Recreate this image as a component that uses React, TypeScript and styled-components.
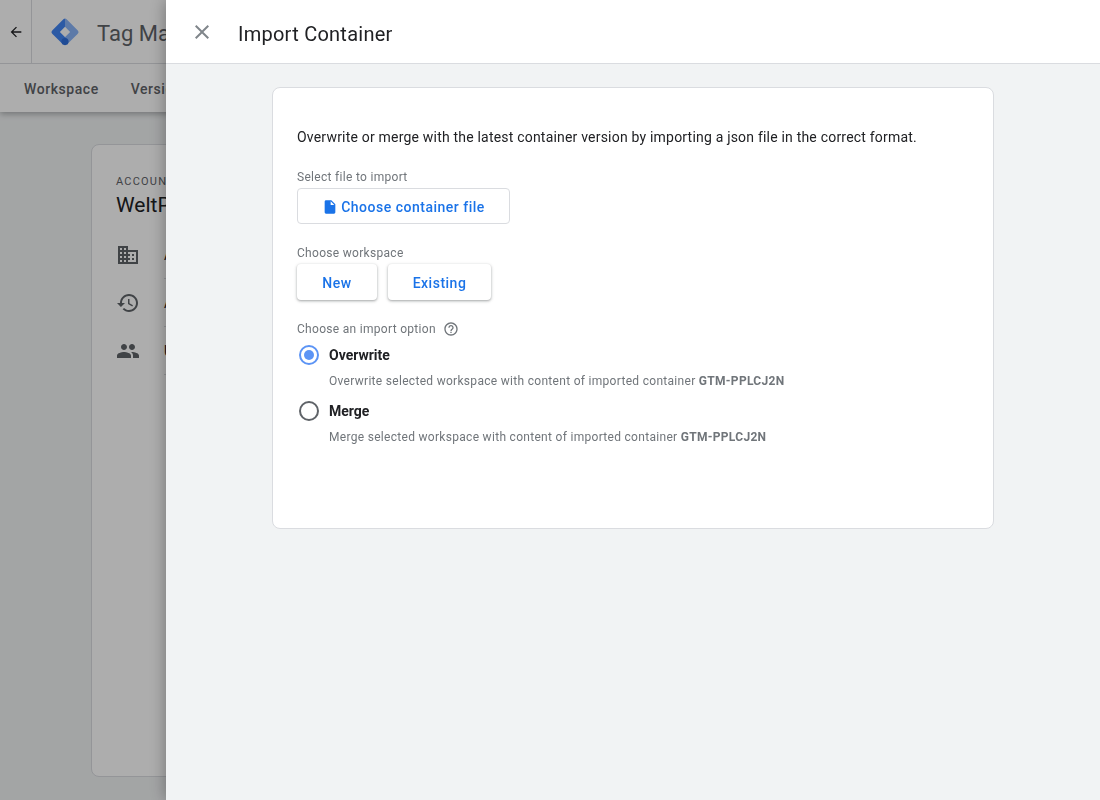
import React from 'react';
import styled, { createGlobalStyle } from 'styled-components';

const GlobalStyle = createGlobalStyle`
  html, body {
    margin: 0;
    height: 100%;
    overflow: hidden;
    background: #f1f3f4;
    font-family: Roboto, "Liberation Sans", sans-serif;
  }
  * {
    box-sizing: border-box;
  }
`;

const Page = styled.div`
  height: 800px;
  display: flex;
  flex-direction: column;
`;

const TopShell = styled.header`
  background: #fff;
  box-shadow: 0 2px 6px rgba(60, 64, 67, 0.4);
`;

const TitleBar = styled.div`
  height: 64px;
  display: flex;
  align-items: center;
  border-bottom: 1px solid #dadce0;
`;

const BackCell = styled.div`
  width: 32px;
  align-self: stretch;
  display: flex;
  align-items: center;
  justify-content: center;
  border-right: 1px solid #dadce0;
  color: #202124;
`;

const LogoCell = styled.div`
  display: flex;
  align-items: center;
  gap: 17px;
  padding: 1px 0 0 18px;
`;

const ProductName = styled.span`
  padding-top: 2px;
  font-size: 22px;
  color: #5f6368;
  white-space: nowrap;
`;

const NavBar = styled.nav`
  height: 48px;
  display: flex;
  align-items: center;
  gap: 32px;
  padding: 1px 0 0 24px;
`;

const NavItem = styled.span`
  font-size: 14px;
  font-weight: 500;
  letter-spacing: 0.55px;
  color: #5f6368;
`;

const AccountCard = styled.section`
  width: 500px;
  height: 633px;
  margin: 32px 0 0 91px;
  padding: 30px 24px;
  background: #fff;
  border: 1px solid #dadce0;
  border-radius: 8px;
`;

const Eyebrow = styled.div`
  font-size: 11px;
  font-weight: 400;
  letter-spacing: 1.2px;
  color: #5f6368;
`;

const AccountName = styled.div`
  margin: 5px 0 14px;
  font-size: 21px;
  color: #202124;
`;

const AccountRow = styled.div`
  height: 48px;
  display: flex;
  align-items: center;
  gap: 24px;
  color: #5f6368;
`;

const RowLabel = styled.span`
  flex: 1;
  align-self: stretch;
  display: flex;
  align-items: center;
  font-size: 14px;
  color: #202124;
  border-bottom: 1px solid #dadce0;
`;

const Scrim = styled.div`
  position: fixed;
  inset: 0;
  background: rgba(0, 0, 0, 0.32);
`;

const Drawer = styled.aside`
  position: fixed;
  top: 0;
  bottom: 0;
  left: 166px;
  right: 0;
  display: flex;
  flex-direction: column;
  background: #f1f3f4;
  box-shadow: 0 0 16px rgba(0, 0, 0, 0.35);
`;

const DrawerHeader = styled.div`
  height: 64px;
  flex: none;
  display: flex;
  align-items: center;
  gap: 24px;
  padding-left: 24px;
  background: #fff;
  border-bottom: 1px solid #dadce0;
`;

const CloseButton = styled.button`
  width: 24px;
  height: 24px;
  padding: 0;
  display: flex;
  border: 0;
  background: none;
  color: #80868b;
`;

const DrawerTitle = styled.h1`
  margin: 0;
  padding-top: 5px;
  font-size: 20px;
  font-weight: 400;
  letter-spacing: 0.25px;
  color: #202124;
`;

const DrawerBody = styled.div`
  padding: 23px 0 0 106px;
`;

const ImportCard = styled.section`
  width: 722px;
  height: 442px;
  padding: 39px 24px 0;
  background: #fff;
  border: 1px solid #dadce0;
  border-radius: 8px;
`;

const Intro = styled.p`
  margin: 0 0 22px;
  font-size: 14px;
  line-height: 20px;
  letter-spacing: 0.2px;
  color: #202124;
`;

const FieldLabel = styled.div`
  display: flex;
  align-items: center;
  gap: 7px;
  height: 16px;
  font-size: 12px;
  letter-spacing: 0.3px;
  color: #70757a;
`;

const Field = styled.div`
  margin-bottom: 21px;
`;

const FileButton = styled.button`
  width: 213px;
  height: 36px;
  margin-top: 3px;
  padding: 2px 0 0;
  display: flex;
  align-items: center;
  justify-content: center;
  gap: 3px;
  background: #fff;
  border: 1px solid #dadce0;
  border-radius: 4px;
  font: 500 14px Roboto, sans-serif;
  letter-spacing: 0.5px;
  color: #1a73e8;
`;

const ButtonRow = styled.div`
  display: flex;
  gap: 11px;
  margin-top: 3px;
`;

const RaisedButton = styled.button<{ $width: number }>`
  width: ${p => p.$width}px;
  height: 36px;
  padding: 2px 0 0;
  background: #fff;
  border: 0;
  border-radius: 4px;
  box-shadow: 0 1px 2px rgba(60, 64, 67, 0.3), 0 1px 3px 1px rgba(60, 64, 67, 0.15);
  font: 500 14px Roboto, sans-serif;
  letter-spacing: 0.5px;
  color: #1a73e8;
`;

const RadioGroup = styled.div`
  margin-top: 6px;
`;

const RadioOption = styled.div`
  display: grid;
  grid-template-columns: 20px 1fr;
  column-gap: 10px;
  align-items: center;
  margin: 0 0 8px 2px;
`;

const RadioCircle = styled.span<{ $checked?: boolean }>`
  width: 20px;
  height: 20px;
  display: flex;
  align-items: center;
  justify-content: center;
  border: 2px solid ${p => (p.$checked ? '#5c94f5' : '#5f6368')};
  border-radius: 50%;

  &::after {
    content: "";
    display: ${p => (p.$checked ? 'block' : 'none')};
    width: 10px;
    height: 10px;
    border-radius: 50%;
    background: #5c94f5;
  }
`;

const RadioName = styled.span`
  height: 24px;
  line-height: 24px;
  font-size: 14px;
  font-weight: 700;
  color: #202124;
`;

const RadioHint = styled.span`
  grid-column: 2;
  margin-top: 4px;
  height: 20px;
  line-height: 20px;
  font-size: 12px;
  letter-spacing: 0.3px;
  color: #70757a;

  b {
    font-weight: 700;
  }
`;

const Icon: React.FC<{ d: string; size: number }> = ({ d, size }) => (
  <svg width={size} height={size} viewBox="0 0 24 24" fill="currentColor">
    <path d={d} />
  </svg>
);

const ICONS = {
  back: 'M20 11H7.83l5.59-5.59L12 4l-8 8 8 8 1.41-1.41L7.83 13H20v-2z',
  close: 'M19 6.41 17.59 5 12 10.59 6.41 5 5 6.41 10.59 12 5 17.59 6.41 19 12 13.41 17.59 19 19 17.59 13.41 12z',
  domain: 'M12 7V3H2v18h20V7H12zM6 19H4v-2h2v2zm0-4H4v-2h2v2zm0-4H4V9h2v2zm0-4H4V5h2v2zm4 12H8v-2h2v2zm0-4H8v-2h2v2zm0-4H8V9h2v2zm0-4H8V5h2v2zm10 12h-8v-2h2v-2h-2v-2h2v-2h-2V9h8v10zm-2-8h-2v2h2v-2zm0 4h-2v2h2v-2z',
  history: 'M13 3c-4.97 0-9 4.03-9 9H1l3.89 3.89.07.14L9 12H6c0-3.87 3.13-7 7-7s7 3.13 7 7-3.13 7-7 7c-1.93 0-3.68-.79-4.94-2.06l-1.42 1.42C8.27 19.99 10.51 21 13 21c4.97 0 9-4.03 9-9s-4.03-9-9-9zm-1 5v5l4.28 2.54.72-1.21-3.5-2.08V8H12z',
  people: 'M16 11c1.66 0 2.99-1.34 2.99-3S17.66 5 16 5c-1.66 0-3 1.34-3 3s1.34 3 3 3zm-8 0c1.66 0 2.99-1.34 2.99-3S9.66 5 8 5C6.34 5 5 6.34 5 8s1.34 3 3 3zm0 2c-2.33 0-7 1.17-7 3.5V19h14v-2.5c0-2.33-4.67-3.5-7-3.5zm8 0c-.29 0-.62.02-.97.05 1.16.84 1.97 1.97 1.97 3.45V19h6v-2.5c0-2.33-4.67-3.5-7-3.5z',
  file: 'M6 2c-1.1 0-1.99.9-1.99 2L4 20c0 1.1.89 2 1.99 2H18c1.1 0 2-.9 2-2V8l-6-6H6zm7 7V3.5L18.5 9H13z',
  help: 'M11 18h2v-2h-2v2zm1-16C6.48 2 2 6.48 2 12s4.48 10 10 10 10-4.48 10-10S17.52 2 12 2zm0 18c-4.41 0-8-3.59-8-8s3.59-8 8-8 8 3.59 8 8-3.59 8-8 8zm0-14c-2.21 0-4 1.79-4 4h2c0-1.1.9-2 2-2s2 .9 2 2c0 2-3 1.75-3 5h2c0-2.25 3-2.5 3-5 0-2.21-1.79-4-4-4z',
};

const TagManagerLogo = () => (
  <svg width="30" height="30" viewBox="0 0 32 32">
    <path d="M14 2.6a2.8 2.8 0 0 1 4 0L29.4 14a2.8 2.8 0 0 1 0 4L18 29.4l-4-5.9L21.5 16 16 10.5z" fill="#8ab4f8" />
    <path d="M14 2.6 2.6 14a2.8 2.8 0 0 0 0 4L14 29.4l4-5.9L10.500 16 16 10.500V1.800z" fill="#4285f4" />
    <circle cx="16" cy="26.200" r="3.800" fill="#2f6fdc" />
  </svg>
);

const App: React.FC = () => {
  return (
    <>
      <GlobalStyle />
      <Page>
        <TopShell>
          <TitleBar>
            <BackCell>
              <Icon d={ICONS.back} size={16} />
            </BackCell>
            <LogoCell>
              <TagManagerLogo />
              <ProductName>Tag Manager</ProductName>
            </LogoCell>
          </TitleBar>
          <NavBar>
            <NavItem>Workspace</NavItem>
            <NavItem>Versions</NavItem>
            <NavItem>Admin</NavItem>
          </NavBar>
        </TopShell>
        <AccountCard>
          <Eyebrow>ACCOUNT</Eyebrow>
          <AccountName>WeltPixel</AccountName>
          <AccountRow>
            <Icon d={ICONS.domain} size={24} />
            <RowLabel>Account Settings</RowLabel>
          </AccountRow>
          <AccountRow>
            <Icon d={ICONS.history} size={24} />
            <RowLabel>Account Activity</RowLabel>
          </AccountRow>
          <AccountRow>
            <Icon d={ICONS.people} size={24} />
            <RowLabel>User Management</RowLabel>
          </AccountRow>
        </AccountCard>
      </Page>
      <Scrim />
      <Drawer>
        <DrawerHeader>
          <CloseButton>
            <Icon d={ICONS.close} size={24} />
          </CloseButton>
          <DrawerTitle>Import Container</DrawerTitle>
        </DrawerHeader>
        <DrawerBody>
          <ImportCard>
            <Intro>Overwrite or merge with the latest container version by importing a json file in the correct format.</Intro>
            <Field>
              <FieldLabel>Select file to import</FieldLabel>
              <FileButton>
                <Icon d={ICONS.file} size={16} />
                Choose container file
              </FileButton>
            </Field>
            <Field>
              <FieldLabel>Choose workspace</FieldLabel>
              <ButtonRow>
                <RaisedButton $width={80}>New</RaisedButton>
                <RaisedButton $width={103}>Existing</RaisedButton>
              </ButtonRow>
            </Field>
            <FieldLabel>
              Choose an import option
              <Icon d={ICONS.help} size={16} />
            </FieldLabel>
            <RadioGroup>
              <RadioOption>
                <RadioCircle $checked />
                <RadioName>Overwrite</RadioName>
                <RadioHint>Overwrite selected workspace with content of imported container <b>GTM-PPLCJ2N</b></RadioHint>
              </RadioOption>
              <RadioOption>
                <RadioCircle />
                <RadioName>Merge</RadioName>
                <RadioHint>Merge selected workspace with content of imported container <b>GTM-PPLCJ2N</b></RadioHint>
              </RadioOption>
            </RadioGroup>
          </ImportCard>
        </DrawerBody>
      </Drawer>
    </>
  );
};

export default App;
